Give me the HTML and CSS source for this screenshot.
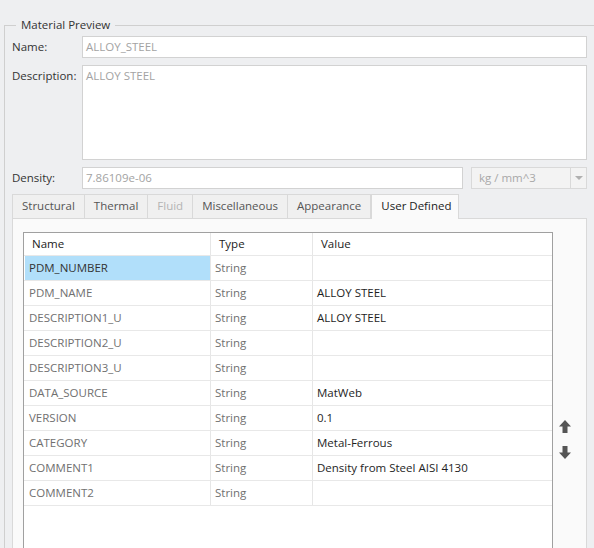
FILE: index.html
```html
<!DOCTYPE html>
<html lang="en">
<head>
    <meta charset="UTF-8">
    <title>Material Preview</title>
    <link rel="stylesheet" href="styles.css">
</head>
<body>
    <fieldset class="preview">
        <legend>Material Preview</legend>

        <div class="field-row">
            <label class="field-label">Name:</label>
            <div class="text-box">ALLOY_STEEL</div>
        </div>

        <div class="field-row top">
            <label class="field-label">Description:</label>
            <div class="text-box multi">ALLOY STEEL</div>
        </div>

        <div class="field-row">
            <label class="field-label">Density:</label>
            <div class="density">
                <div class="text-box grow">7.86109e-06</div>
                <div class="combo">
                    <span class="combo-text">kg / mm^3</span>
                    <span class="combo-btn"><span class="caret"></span></span>
                </div>
            </div>
        </div>

        <div class="tabs">
            <div class="tab">Structural</div>
            <div class="tab">Thermal</div>
            <div class="tab disabled">Fluid</div>
            <div class="tab">Miscellaneous</div>
            <div class="tab">Appearance</div>
            <div class="tab active">User Defined</div>
        </div>

        <div class="tab-pane">
            <div class="grid">
                <div class="grid-row head">
                    <div class="cell c-name">Name</div>
                    <div class="cell c-type">Type</div>
                    <div class="cell c-value">Value</div>
                </div>
                <div class="grid-row">
                    <div class="cell c-name selected">PDM_NUMBER</div>
                    <div class="cell c-type">String</div>
                    <div class="cell c-value"></div>
                </div>
                <div class="grid-row">
                    <div class="cell c-name">PDM_NAME</div>
                    <div class="cell c-type">String</div>
                    <div class="cell c-value">ALLOY STEEL</div>
                </div>
                <div class="grid-row">
                    <div class="cell c-name">DESCRIPTION1_U</div>
                    <div class="cell c-type">String</div>
                    <div class="cell c-value">ALLOY STEEL</div>
                </div>
                <div class="grid-row">
                    <div class="cell c-name">DESCRIPTION2_U</div>
                    <div class="cell c-type">String</div>
                    <div class="cell c-value"></div>
                </div>
                <div class="grid-row">
                    <div class="cell c-name">DESCRIPTION3_U</div>
                    <div class="cell c-type">String</div>
                    <div class="cell c-value"></div>
                </div>
                <div class="grid-row">
                    <div class="cell c-name">DATA_SOURCE</div>
                    <div class="cell c-type">String</div>
                    <div class="cell c-value">MatWeb</div>
                </div>
                <div class="grid-row">
                    <div class="cell c-name">VERSION</div>
                    <div class="cell c-type">String</div>
                    <div class="cell c-value">0.1</div>
                </div>
                <div class="grid-row">
                    <div class="cell c-name">CATEGORY</div>
                    <div class="cell c-type">String</div>
                    <div class="cell c-value">Metal-Ferrous</div>
                </div>
                <div class="grid-row">
                    <div class="cell c-name">COMMENT1</div>
                    <div class="cell c-type">String</div>
                    <div class="cell c-value">Density from Steel AISI 4130</div>
                </div>
                <div class="grid-row">
                    <div class="cell c-name">COMMENT2</div>
                    <div class="cell c-type">String</div>
                    <div class="cell c-value"></div>
                </div>
            </div>

            <!-- move row up / down -->
            <div class="movers">
                <svg width="12" height="13" viewBox="0 0 12 13"><path d="M6 0 L12 6.5 L8.5 6.5 L8.5 13 L3.5 13 L3.5 6.5 L0 6.5 Z" fill="#555"/></svg>
                <svg width="12" height="13" viewBox="0 0 12 13"><path d="M6 13 L12 6.5 L8.5 6.5 L8.5 0 L3.5 0 L3.5 6.5 L0 6.5 Z" fill="#555"/></svg>
            </div>
        </div>
    </fieldset>
</body>
</html>
```

FILE: styles.css
```css
* {
    box-sizing: border-box;
}

body {
    margin: 0;
    background: #eeeff1;
    font-family: "Open Sans", "Noto Sans", sans-serif;
    font-size: 11.5px;
    color: #333;
    overflow: hidden;
    height: 548px;
}

/* group box runs off the right and bottom of the window */
.preview {
    width: 590px;
    margin: 17px 0 0 4px;
    padding: 3px 0 0 7px;
    border: 1px solid #cfcfcf;
    border-right: none;
    border-bottom: none;
    min-width: 0;
}

.preview legend {
    margin-left: 4px;
    padding: 0 5px;
    line-height: 16px;
    color: #333;
}

.field-row {
    display: flex;
    align-items: center;
    width: 575px;
    margin-bottom: 7px;
}

.field-row.top {
    align-items: flex-start;
}

.field-row.top .field-label {
    padding-top: 3px;
}

.field-label {
    width: 70px;
    flex: none;
    line-height: 16px;
}

.text-box {
    flex: 1;
    height: 22px;
    background: #fff;
    border: 1px solid #d2d2d2;
    padding: 2px 3px;
    line-height: 16px;
    color: #a3a3a3;
}

.text-box.multi {
    height: 95px;
}

.density {
    flex: 1;
    display: flex;
    gap: 8px;
}

.combo {
    width: 116px;
    height: 22px;
    display: flex;
    border: 1px solid #d9d9d9;
    background: #f3f3f3;
}

.combo-text {
    flex: 1;
    padding: 2px 7px;
    line-height: 16px;
    color: #a8a8a8;
}

.combo-btn {
    width: 16px;
    border-left: 1px solid #d9d9d9;
    display: flex;
    align-items: center;
    justify-content: center;
}

.caret {
    width: 0;
    height: 0;
    border-left: 4px solid transparent;
    border-right: 4px solid transparent;
    border-top: 4px solid #b0b0b0;
}

/* tab strip */
.tabs {
    display: flex;
    align-items: flex-end;
    height: 25px;
    margin-top: -3px;
}

.tab {
    height: 24px;
    padding: 2px 9px 0;
    line-height: 18px;
    background: #f0f0f0;
    border: 1px solid #d9d9d9;
    border-bottom: none;
    border-left: none;
    color: #555;
}

.tab:first-child {
    border-left: 1px solid #d9d9d9;
}

.tab.disabled {
    color: #b4b4b4;
}

.tab.active {
    height: 25px;
    padding-right: 7px;
    background: #fafafa;
    color: #222;
    border-left: 1px solid #d9d9d9;
    margin-bottom: -1px;
    position: relative;
    z-index: 1;
}

.tab-pane {
    width: 575px;
    height: 340px;
    display: flex;
    align-items: flex-start;
    background: #fafafa;
    border: 1px solid #d9d9d9;
    padding: 13px 0 0 10px;
}

/* parameter table */
.grid {
    width: 530px;
    height: 330px;
    background: #fff;
    border: 1px solid #a0a0a0;
    color: #707070;
}

.grid-row {
    display: flex;
    height: 25px;
    border-bottom: 1px solid #e8e8e8;
}

.grid-row.head {
    height: 23px;
    color: #222;
}

.cell {
    line-height: 24px;
    padding-left: 4px;
    border-right: 1px solid #e6e6e6;
}

.head .cell {
    line-height: 22px;
    padding-left: 8px;
}

.c-name {
    width: 186px;
    margin-left: 1px;
}

.head .c-name {
    margin-left: 0;
    width: 187px;
}

.c-type {
    width: 102px;
}

.c-value {
    flex: 1;
    border-right: none;
    color: #1e1e1e;
}

.head .c-value {
    color: #222;
}

.cell.selected {
    background: #b1dffa;
    color: #333;
}

.movers {
    display: flex;
    flex-direction: column;
    gap: 13px;
    margin: 188px 0 0 6px;
}

.movers svg {
    display: block;
}
```
